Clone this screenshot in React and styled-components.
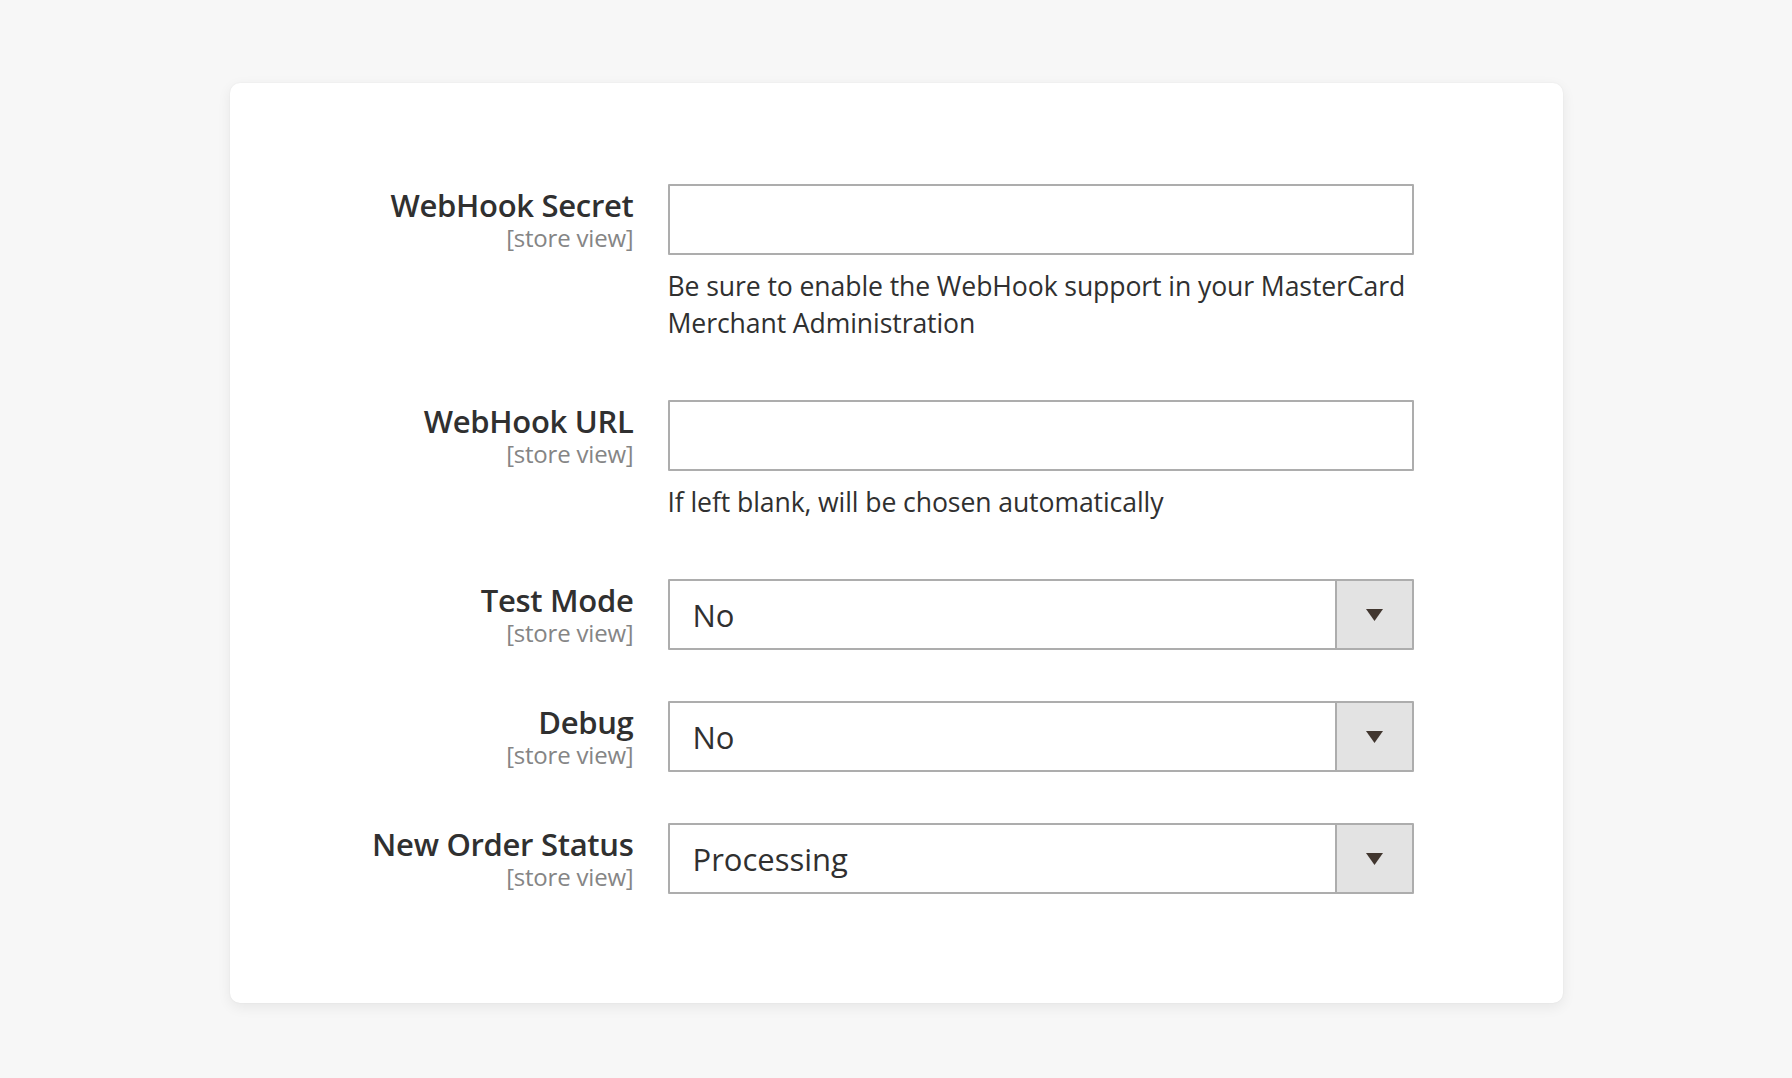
import React from "react";
import styled, { createGlobalStyle } from "styled-components";

const GlobalStyle = createGlobalStyle`
  * { box-sizing: border-box; }
  body {
    margin: 0;
    background: #f7f7f7;
    font-family: "Open Sans", "Liberation Sans", sans-serif;
    color: #303030;
  }
`;

const fields = [
  {
    label: "WebHook Secret",
    type: "text",
    note: "Be sure to enable the WebHook support in your MasterCard Merchant Administration",
  },
  {
    label: "WebHook URL",
    type: "text",
    note: "If left blank, will be chosen automatically",
  },
  { label: "Test Mode", type: "select", value: "No" },
  { label: "Debug", type: "select", value: "No" },
  { label: "New Order Status", type: "select", value: "Processing" },
];

const App = () => {
  return (
    <Page>
      <GlobalStyle />
      <Card>
        {fields.map((f) => (
          <Row key={f.label} hasNote={!!f.note}>
            <LabelCol>
              <Title>{f.label}</Title>
              <Scope>[store view]</Scope>
            </LabelCol>
            <FieldCol>
              {f.type === "text" ? (
                <TextInput type="text" />
              ) : (
                <SelectBox>
                  <SelectValue>{f.value}</SelectValue>
                  <ArrowBox>
                    <svg width="17" height="12" viewBox="0 0 17 12">
                      <path d="M0 0H17L8.5 12Z" fill="#41362f" />
                    </svg>
                  </ArrowBox>
                </SelectBox>
              )}
              {f.note && <Note>{f.note}</Note>}
            </FieldCol>
          </Row>
        ))}
      </Card>
    </Page>
  );
};

export default App;

const Page = styled.div`
  min-height: 100vh;
  display: flex;
  justify-content: center;
  align-items: flex-start;
  padding-top: 83px;
`;

const Card = styled.div`
  width: 1333px;
  background: #ffffff;
  border-radius: 10px;
  box-shadow: 0 4px 14px rgba(0, 0, 0, 0.07), 0 0 2px rgba(0, 0, 0, 0.06);
  padding: 101px 0 58px 0;
`;

const Row = styled.div`
  display: grid;
  grid-template-columns: 404px 746px;
  column-gap: 34px;
  margin-bottom: ${(p) => (p.hasNote ? "58px" : "51px")};
`;

const LabelCol = styled.div`
  display: flex;
  flex-direction: column;
  align-items: flex-end;
  text-align: right;
  padding-top: 3px;
`;

const Title = styled.div`
  font-size: 31px;
  font-weight: 600;
  line-height: 36px;
  color: #303030;
  letter-spacing: -0.3px;
`;

const Scope = styled.div`
  margin-top: 2px;
  font-size: 24px;
  line-height: 26px;
  color: #858585;
  letter-spacing: -0.2px;
`;

const FieldCol = styled.div`
  display: flex;
  flex-direction: column;
`;

const TextInput = styled.input`
  width: 100%;
  height: 71px;
  border: 2px solid #adadad;
  border-radius: 1px;
  background: #fff;
  font-family: inherit;
  font-size: 29px;
  padding: 0 22px;
  outline: none;
`;

const Note = styled.div`
  margin-top: 13px;
  font-size: 26.6px;
  line-height: 37px;
  color: #303030;
  letter-spacing: -0.1px;
`;

const SelectBox = styled.div`
  display: flex;
  height: 71px;
  border: 2px solid #adadad;
  border-radius: 1px;
  background: #fff;
`;

const SelectValue = styled.div`
  flex: 1;
  display: flex;
  align-items: center;
  padding-left: 23px;
  font-size: 31px;
  color: #303030;
`;

const ArrowBox = styled.div`
  width: 77px;
  display: flex;
  align-items: center;
  justify-content: center;
  background: #e3e3e3;
  border-left: 2px solid #adadad;
`;
